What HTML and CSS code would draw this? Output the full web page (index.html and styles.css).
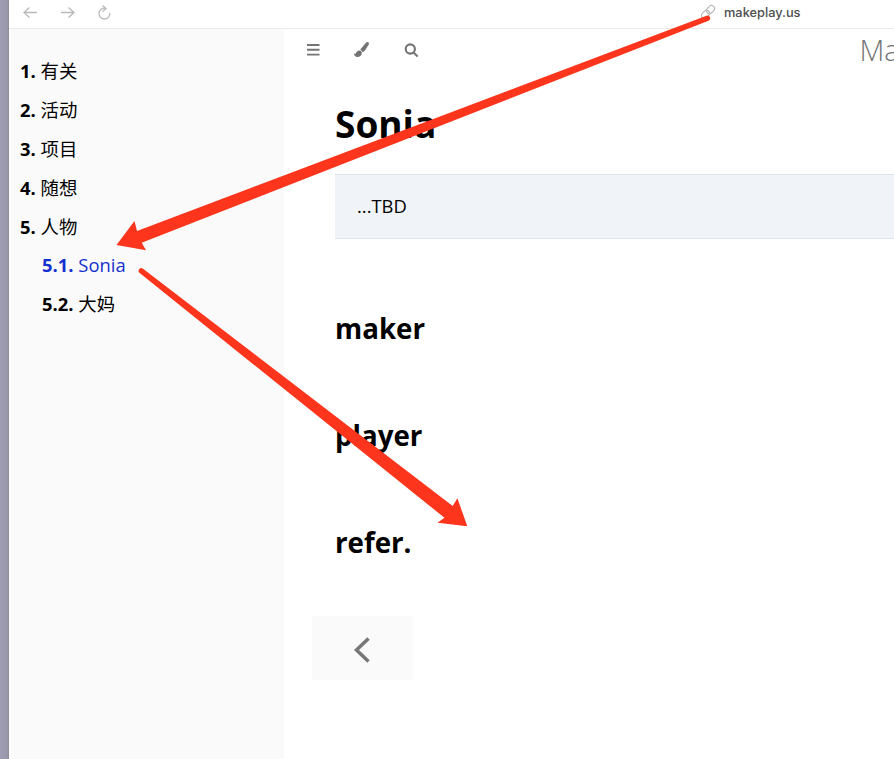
FILE: index.html
```
<!DOCTYPE html>
<html lang="zh-CN">
<head>
<meta charset="utf-8">
<title>makeplay.us</title>
<link rel="stylesheet" href="styles.css">
</head>
<body>
<div class="window">
  <header class="browser-bar">
    <svg class="nav-icons" width="90" height="18" viewBox="0 0 90 18"><path d="M14 8.500H1M6.500 3.500L1 8.500l5.500 5M38 8.500h13M45.500 3.500L51 8.500l-5.500 5"/><path d="M82.500 4.300a5.400 5.400 0 1 0 4.300 4.500M79.500 1.500l3.500 3-3.500 3"/></svg>
    <div class="address">
      <svg width="16" height="16" viewBox="0 0 16 16"><g transform="rotate(-45 8 8)"><rect x="0" y="5" width="9" height="6" rx="3"/><rect x="7" y="5" width="9" height="6" rx="3"/></g></svg>
      <span>makeplay.us</span>
    </div>
  </header>
  <div class="book">
    <nav class="sidebar">
      <ol>
        <li><b>1.</b> 有关</li>
        <li><b>2.</b> 活动</li>
        <li><b>3.</b> 项目</li>
        <li><b>4.</b> 随想</li>
        <li><b>5.</b> 人物</li>
        <li class="sub active"><b>5.1.</b> Sonia</li>
        <li class="sub"><b>5.2.</b> 大妈</li>
      </ol>
    </nav>
    <main class="page">
      <div class="menu-bar">
        <svg class="tools" width="120" height="20" viewBox="0 0 120 20">
          <path class="line" d="M1 5h12.500M1 9.800h12.500M1 14.600h12.500"/>
          <path d="M62.300 2.300c.9.700.8 1.800.2 2.800l-3.400 5.200c-.7 1-1.600 1.600-2.600 1.900-.3-1.300-1-2-2.200-2.300.2-.8.700-1.500 1.400-2.200L60.200 2.600c.7-.6 1.500-.8 2.100-.3z"/>
          <path d="M53.500 10.500c1.500.2 2.300 1.100 2.300 2.400-.2 2.700-2 4-4.300 4-2.200 0-3.500-1.300-3.500-3.700.8.500 1.400.8 1.900.2.400-1.500 1.700-3.100 3.600-2.900z"/>
          <circle class="lens" cx="104.300" cy="9" r="4.600"/>
          <path class="lens" d="M107.600 12.400l4 4"/>
        </svg>
        <div class="book-title">Ma</div>
      </div>
      <article>
        <h1>Sonia</h1>
        <blockquote>...TBD</blockquote>
        <h2>maker</h2>
        <h2>player</h2>
        <h2>refer.</h2>
      </article>
      <div class="previous"><svg width="20" height="28" viewBox="0 0 20 28"><path d="M16.500 2.500L4.500 14l12 11.500"/></svg></div>
    </main>
  </div>
</div>
<svg class="arrows" width="894" height="759" viewBox="0 0 894 759">
  <path d="M706.500 15.700L137 231l-2.500-10L116.500 245l29.500 5.200-4.300-7.500L708.500 20.700A2.600 2.600 0 0 0 706.500 15.700z"/>
  <path d="M143 268.700L452.700 506l4.700-7.700L467.300 526.300l-29.800-3.500 7-5L139.700 273A2.700 2.700 0 0 1 143 268.700z"/>
</svg>
</body>
</html>
```
FILE: styles.css
```
* { box-sizing: border-box; }
body {
  margin: 0;
  height: 759px;
  overflow: hidden;
  position: relative;
  background: linear-gradient(90deg, #9d9cb3 0, #9a98ad 6px, #8f8d9c 9px);
  color: #000;
  font: 18.400px/39px "Open Sans", "Noto Sans CJK SC", sans-serif;
}
svg { display: block; }
.window {
  margin-left: 9px;
  height: 759px;
  background: #fff;
  display: flex;
  flex-direction: column;
}
.browser-bar {
  height: 29px;
  flex: none;
  display: flex;
  border-bottom: 1px solid #ebebeb;
}
.nav-icons {
  margin: 4px 0 0 14px;
  fill: none;
  stroke: #b9b9b9;
  stroke-width: 1.300;
}
.address {
  display: flex;
  gap: 8px;
  margin: 4px 0 0 588px;
  color: #4d4d4d;
  font: 500 12.800px/17px Inter, sans-serif;
}
.address svg {
  margin-left: -1px;
  fill: none;
  stroke: #bbb;
  stroke-width: 1.200;
}
.book { display: flex; flex: 1; min-height: 0; }
.sidebar {
  width: 275px;
  flex: none;
  background: #fafafa;
  border-left: 2px solid #fdfdfd;
  padding: 22px 0 0 9px;
}
ol { list-style: none; margin: 0; padding: 0; }
li { height: 38.900px; white-space: nowrap; }
.sub { padding-left: 22px; }
.active { color: #1430cf; }
.page { flex: 1; min-width: 0; }
.menu-bar {
  height: 50px;
  display: flex;
  justify-content: space-between;
}
.tools { margin: 11px 0 0 22px; flex: none; fill: #747474; }
.tools .line { stroke: #747474; stroke-width: 1.900; }
.tools .lens { fill: none; stroke: #747474; stroke-width: 2.100; }
.book-title {
  width: 34.500px;
  white-space: nowrap;
  color: #747474;
  font-size: 28.800px;
  font-weight: 300;
  line-height: 41px;
}
article { padding-left: 51px; }
h1 { margin: 18px 0 23px; font-size: 37px; line-height: 54px; }
blockquote {
  height: 65px;
  margin: 0 0 69px;
  padding: 0 22px;
  background: #f0f4f8;
  border: 1px solid #dee5ea;
  border-width: 1px 0;
  line-height: 61px;
}
h2 { margin: 0 0 67px; font-size: 27.700px; line-height: 40px; }
h2:last-child { margin-bottom: 0; }
.previous {
  width: 101px;
  height: 64px;
  margin: 54px 0 0 28px;
  background: #fafafa;
  display: flex;
  align-items: center;
  justify-content: center;
}
.previous svg { margin: 4px 2px 0 0; fill: none; stroke: #777; stroke-width: 3.500; }
.arrows { position: absolute; left: 0; top: 0; fill: #fc351c; }
```
